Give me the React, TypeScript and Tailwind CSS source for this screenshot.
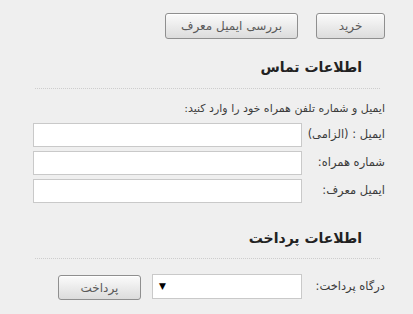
const font = { fontFamily: '"DejaVu Sans", "Noto Sans", sans-serif' };

const Button = ({ label, className }: { label: string; className: string }) => (
  <button
    className={`flex items-center justify-center rounded-[3px] border border-[#8f8f8f] bg-gradient-to-b from-[#fbfbfb] to-[#dcdcdc] text-[12px] text-[#5a5a5a] shadow-[inset_0_1px_0_#fff] ${className}`}
  >
    {label}
  </button>
);

const Field = ({ label }: { label: string }) => (
  <div className="flex h-[24px] items-center">
    <span className="w-[83px] text-[11.5px] text-[#3c3c3c]">{label}</span>
    <input className="h-[24px] w-[269px] border border-[#c9c9c9] bg-white outline-none" />
  </div>
);

const App = () => {
  return (
    <div dir="rtl" style={font} className="h-[314px] w-[413px] overflow-hidden bg-[#efefef]">
      <div className="flex gap-[18px] pr-[28px] pt-[13px]">
        <Button label="خرید" className="h-[26px] w-[69px]" />
        <Button label="بررسی ایمیل معرف" className="h-[26px] w-[133px]" />
      </div>

      <h2 className="mt-[19px] pr-[51px] text-[14px] font-bold leading-[18px] text-[#222]">اطلاعات تماس</h2>
      <div className="ml-[35px] mr-[33px] mt-[12px] border-t border-dotted border-[#cdcdcd]" />

      <p className="mt-[12px] pr-[28px] text-[11px] leading-[16px] text-[#3c3c3c]">
        ایمیل و شماره تلفن همراه خود را وارد کنید:
      </p>
      <div className="mt-[6px] flex flex-col gap-[4px] pr-[28px]">
        <Field label="ایمیل : (الزامی)" />
        <Field label="شماره همراه:" />
        <Field label="ایمیل معرف:" />
      </div>

      <h2 className="mt-[26px] pr-[51px] text-[14px] font-bold leading-[18px] text-[#222]">اطلاعات پرداخت</h2>
      <div className="ml-[35px] mr-[33px] mt-[11px] border-t border-dotted border-[#cdcdcd]" />

      <div className="mt-[14px] flex items-center pr-[28px]">
        <span className="w-[83px] text-[11.5px] text-[#3c3c3c]">درگاه پرداخت:</span>
        <div className="flex h-[25px] w-[150px] items-center justify-end border border-[#c9c9c9] bg-white pl-[6px]">
          <span className="text-[9px] text-black">▼</span>
        </div>
        <Button label="پرداخت" className="mr-[11px] mt-[2px] h-[25px] w-[83px]" />
      </div>
    </div>
  );
};

export default App;
